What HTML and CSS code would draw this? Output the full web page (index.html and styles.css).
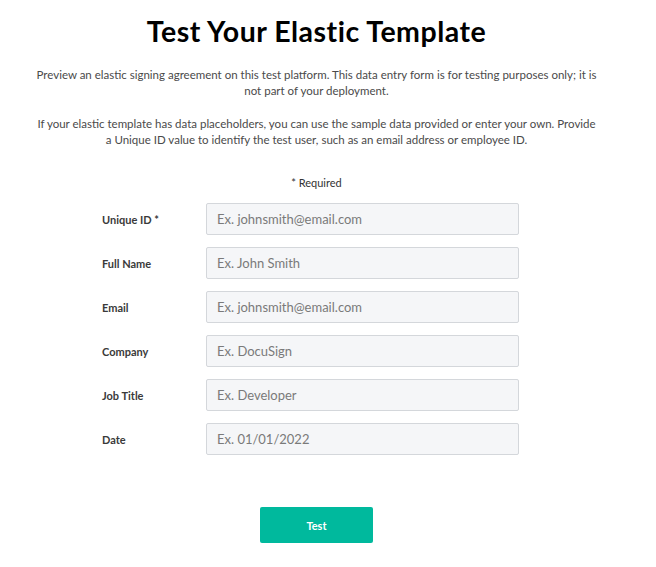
FILE: index.html
```html
<!DOCTYPE html>
<html>
<head>
<meta charset="utf-8">
<link rel="stylesheet" href="styles.css">
</head>
<body>
<main class="page">
  <h1 class="title">Test Your Elastic Template</h1>
  <p class="intro">Preview an elastic signing agreement on this test platform. This data entry form is for testing purposes only; it is not part of your deployment.</p>
  <p class="intro">If your elastic template has data placeholders, you can use the sample data provided or enter your own. Provide a Unique ID value to identify the test user, such as an email address or employee ID.</p>
  <p class="required">* Required</p>
  <form class="form">
    <div class="row"><label class="label">Unique ID *</label><input class="field" placeholder="Ex. johnsmith@email.com"></div>
    <div class="row"><label class="label">Full Name</label><input class="field" placeholder="Ex. John Smith"></div>
    <div class="row"><label class="label">Email</label><input class="field" placeholder="Ex. johnsmith@email.com"></div>
    <div class="row"><label class="label">Company</label><input class="field" placeholder="Ex. DocuSign"></div>
    <div class="row"><label class="label">Job Title</label><input class="field" placeholder="Ex. Developer"></div>
    <div class="row"><label class="label">Date</label><input class="field" placeholder="Ex. 01/01/2022"></div>
    <div class="actions"><button type="button" class="btn">Test</button></div>
  </form>
</main>
</body>
</html>
```
FILE: styles.css
```css
* { box-sizing: border-box; }
body {
  margin: 0;
  background: #fff;
  font-family: "Lato", "Liberation Sans", sans-serif;
  color: #333;
}
.page {
  width: 617px;
  margin-left: 8px;
  padding-top: 13px;
  display: flex;
  flex-direction: column;
  align-items: center;
}
.title {
  margin: 0;
  font-size: 28.5px;
  line-height: 36px;
  font-weight: 700;
  letter-spacing: 0.5px;
  color: #000;
}
.intro {
  margin: 18px 0 0;
  width: 562px;
  text-align: center;
  font-size: 11.5px;
  line-height: 16px;
  color: #4a4a4a;
}
.intro + .intro { margin-top: 17px; }
.required {
  margin: 27px 0 0;
  font-size: 11px;
  line-height: 16px;
  color: #333;
}
.form {
  margin-top: 12px;
  display: flex;
  flex-direction: column;
  gap: 12px;
  align-self: flex-start;
  margin-left: 94px;
}
.row {
  display: flex;
  align-items: center;
}
.label {
  width: 104px;
  font-size: 11px;
  font-weight: 700;
  color: #3a3a3a;
}
.field {
  width: 313px;
  height: 32px;
  border: 1px solid #d4d7db;
  border-radius: 2px;
  background: #f5f6f8;
  padding: 0 10px;
  font-family: inherit;
  font-size: 13px;
  color: #333;
}
.field::placeholder { color: #7a7a7a; }
.actions {
  margin-top: 40px;
  padding-left: 158px;
}
.btn {
  width: 113px;
  height: 36px;
  border: none;
  border-radius: 2px;
  background: #00b99d;
  color: #fff;
  font-family: inherit;
  font-size: 11px;
  font-weight: 700;
}
```
